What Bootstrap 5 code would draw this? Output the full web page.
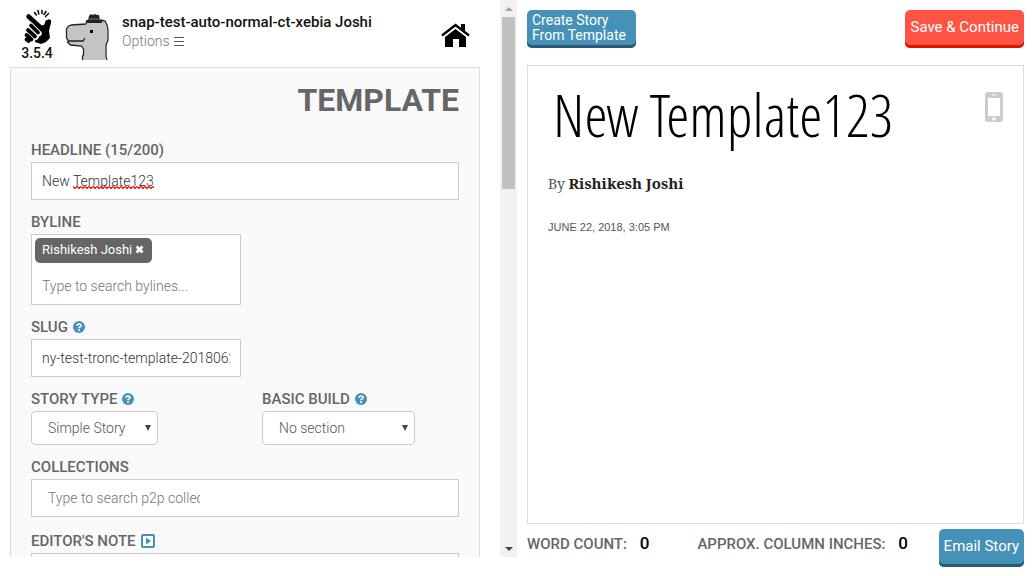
<!DOCTYPE html>
<html lang="en">
<head>
<meta charset="utf-8">
<meta name="viewport" content="width=device-width, initial-scale=1">
<title>Template editor</title>
<link href="https://cdn.jsdelivr.net/npm/bootstrap@5.3.0/dist/css/bootstrap.min.css" rel="stylesheet">
<style>
  body { font-family: Roboto, "Liberation Sans", sans-serif; font-size: 14px; color: #111; background: #fff; }
  a { color: inherit; text-decoration: none; }
  .app { height: 100vh; overflow: hidden; }
  .editor { height: calc(100vh - 19px); overflow: hidden; }
  .editor-body { min-width: 0; padding: 0 20px 0 10px; overflow: hidden; }
  .topbar { height: 67px; padding-top: 9px; }
  .version { width: 54px; font-size: 14px; line-height: 14px; font-weight: 500; }
  .user-name { font-size: 15px; line-height: 20px; margin: 3px 0 0; font-weight: 500; }
  .options { font-size: 14px; line-height: 18px; color: #777; font-weight: 300; }
  .home-link { margin: 14px 10px 0 0; }
  .form-panel { border: 1px solid #ddd; padding: 12px 20px 40px;
    background: linear-gradient(135deg, #f5f5f5 25%, #fff 25% 50%, #f5f5f5 50% 75%, #fff 75%) 0 0 / 4px 4px; }
  .form-panel h1 { font-size: 32px; line-height: 40px; margin-bottom: 18px; font-weight: 700; color: #666; }
  .field { margin-bottom: 10px; }
  .note-field { margin-top: 12px; }
  .field-label { display: flex; align-items: center; gap: 5px; font-size: 15px; line-height: 24px; height: 24px; font-weight: 500; color: #666; }
  .box, .tag-box { background: #fff; border: 1px solid #ccc; border-radius: 0; }
  .box { height: 38px; padding: 0 10px; font-size: 14px; color: #333; font-weight: 300; }
  .wide-pad { padding-left: 16px; }
  .half { flex: none; width: calc(50% - 4px); }
  .pair { gap: 21px; }
  .squiggle { left: 42px; top: 24px; }
  .tag-box { height: 71px; padding: 3px; }
  .tag-box input { border: 0; outline: 0; padding: 0 7px; height: 34px; font-weight: 300; width: 100%; background: none; margin-top: 6px; }
  input::placeholder { color: #757575 !important; opacity: 1; }
  .tag { display: inline-flex; align-items: center; gap: 3px; height: 25px; padding: 0 8px 2px 7px; background: #666; color: #fff; border-radius: 5px; font-size: 13px; }
  .tag button { border: 0; background: none; padding: 0; line-height: 8px; color: #fff; }
  .picker { height: 34px; border: 1px solid #ccc; border-radius: 4px; padding: 0 16px; font-size: 14px; font-weight: 300; color: #555; appearance: none;
    background: #fff url("data:image/svg+xml,%3Csvg xmlns='http://www.w3.org/2000/svg' width='6' height='6'%3E%3Cpath d='M0 0h6L3 6z' fill='%23444'/%3E%3C/svg%3E") no-repeat right 6px top 13px; }
  .picker-story { width: 127px; }
  .picker-build { width: 153px; }
  .collections input { border: 0; outline: 0; padding: 0; width: 152px; font-weight: 300; background: none; }
  .rail { width: 17px; flex: none; background: #f1f1f1; }
  .rail-end { height: 17px; }
  .thumb { height: 172px; width: 13px; background: #c1c1c1; }
  .preview-pane { padding: 10px 10px 9px; }
  .push { border: 0; border-radius: 5px; color: #fff; background: #4591b8; height: 38px; padding: 0 5px 3px; font-size: 15px; line-height: 15px; text-align: left; box-shadow: inset 0 -3px #2b5a72; }
  .push-small { font-size: 14px; padding-right: 10px; }
  .push-save { background: #ff5444; box-shadow: inset 0 -3px #dc1400; }
  .preview { border: 1px solid #ddd; margin: 17px 0 5px; padding: 8px 20px; }
  .preview h2 { font-family: "Open Sans Condensed Light", "Open Sans Condensed", "Roboto Condensed", sans-serif; font-weight: 300; font-size: 59px; line-height: 80px; margin: 0; padding-left: 5px; color: #000; }
  .phone { margin-top: 18px; }
  .byline { font-family: "Noto Serif", "DejaVu Serif", "Liberation Serif", serif; font-size: 14px; line-height: 20px; margin: 19px 0 0; color: #555; }
  .byline b { color: #222; font-size: 15px; }
  .dateline { font-family: "Liberation Sans", sans-serif; font-size: 11px; line-height: 16px; margin: 25px 0 0; color: #555; }
  .count { font-size: 15px; line-height: 28px; font-weight: 500; color: #666; }
  .count b { color: #000; margin-left: 9px; font-size: 17px; font-weight: 500; }
  .count-gap { gap: 48px; }
</style>
</head>
<body>
<div class="app row g-0">
  <section class="col-6 editor d-flex">
    <div class="editor-body flex-grow-1">
      <header class="topbar d-flex">
        <a href="#" class="version text-center">
          <svg class="d-block mx-auto" width="30" height="37" viewBox="0 0 30 37" aria-hidden="true">
            <path d="M9 14l7 3 6-1 2-5 5 2-2 9 1 7-4 4-5 2-6-2-8-9z"/>
            <g fill="none" stroke="#000" stroke-linecap="round">
              <path stroke-width="4.500" d="M6.500 7.500L18 18M27 12.500L24 21"/>
              <path stroke-width="1.500" d="M12.500 3.500l1.800 2.500M16 1.500l.8 3.500M20 1.500v3M24 2.500l-2 3M26.500 4.500l-3 3"/>
              <path stroke="#fff" stroke-width="5.500" d="M9 16.500l8 8M6 21l8 7M4.500 26l6 5"/>
              <path stroke-width="3.800" d="M9 16.500l7 7M6 21l7 6.500M4.500 26l5 4.500M4.500 30.500l2 1.500"/>
            </g>
          </svg>3.5.4</a>
        <svg class="flex-shrink-0" width="46" height="51" viewBox="-2 0 46 51" aria-hidden="true">
          <path d="M16 51v-4l1-1v-6l-2-3-11-1-3-3 1-2-2-2V20l2-3 3-1 15-1 2-4 4-2h8l4 3 2 4 1 5v10l-2 5v12l1 6z" fill="#c4c4c4"/>
          <path d="M16.500 51v-4l1-1v-6l-2-3-11-1-3-3 1-1-2-3V20l2-3 3-1 14-1 2-3 2-1M35 11l4 1 2 4 1 5v10l-2 5v12l1 3M2 32h15l2-3" fill="none" stroke="#222" stroke-width="1.300"/>
          <path d="M20 14v-3h2l1-4 2-2 2 1 2-1 2 1h2l1 5h2v3z" fill="#222"/>
          <path d="M22 10h12" stroke="#777"/><rect x="24" y="21" width="3" height="3"/>
        </svg>
        <div class="ms-2 ps-1 flex-grow-1">
          <p class="user-name">snap-test-auto-normal-ct-xebia Joshi</p>
          <a href="#" class="options d-flex align-items-center gap-1">Options
            <svg width="10" height="9" viewBox="0 0 10 9" aria-hidden="true"><path d="M0 .5h10M0 4.500h10M0 8.500h10" stroke="#555"/></svg></a>
        </div>
        <a href="#" class="home-link" aria-label="Home">
          <svg class="d-block" width="29" height="24" viewBox="0 0 29 24"><path d="M4 14L14.500 6 25 14v10h-7v-8h-6v8H4z"/><path d="M1 12.500L14.500 2 28 12.500" fill="none" stroke="#000" stroke-width="2.400"/><path d="M20 1h4v8l-4-3z"/></svg></a>
      </header>

      <form class="form-panel">
        <h1 class="text-end">TEMPLATE</h1>
        <div class="field">
          <label class="field-label" for="headline">HEADLINE (15/200)</label>
          <div class="position-relative">
            <input id="headline" class="box d-block w-100" value="New Template123" spellcheck="false">
            <svg class="squiggle position-absolute" width="81" height="3" aria-hidden="true"><defs><pattern id="wave" width="4" height="3" patternUnits="userSpaceOnUse"><path d="M0 .5l2 2 2-2" fill="none" stroke="#f00" stroke-width="1.200"/></pattern></defs><rect width="81" height="3" fill="url(#wave)"/></svg>
          </div>
        </div>
        <div class="field half">
          <label class="field-label" for="byline">BYLINE</label>
          <div class="tag-box">
            <span class="tag">Rishikesh Joshi <button type="button" aria-label="Remove"><svg width="9" height="9" viewBox="0 0 9 9"><path d="M1.500 1.500l6 6M7.500 1.500l-6 6" stroke="#fff" stroke-width="2.800"/></svg></button></span>
            <input id="byline" placeholder="Type to search bylines...">
          </div>
        </div>
        <div class="field half">
          <label class="field-label" for="slug">SLUG
            <svg width="12" height="12" viewBox="0 0 12 12" aria-hidden="true"><g id="help"><circle cx="6" cy="6" r="6" fill="#4591b8"/><path d="M4 4.700C4 2.400 8 2.500 8 4.500 8 5.900 6 5.700 6 7.300M6 8.300v1.700" fill="none" stroke="#fff" stroke-width="1.700"/></g></svg></label>
          <input id="slug" class="box d-block w-100" value="ny-test-tronc-template-20180622">
        </div>
        <div class="field d-flex pair">
          <div class="half">
            <label class="field-label" for="story">STORY TYPE <svg width="12" height="12" viewBox="0 0 12 12" aria-hidden="true"><use href="#help"/></svg></label>
            <select id="story" class="picker picker-story d-block"><option>Simple Story</option></select>
          </div>
          <div>
            <label class="field-label" for="build">BASIC BUILD <svg width="12" height="12" viewBox="0 0 12 12" aria-hidden="true"><use href="#help"/></svg></label>
            <select id="build" class="picker picker-build d-block"><option>No section</option></select>
          </div>
        </div>
        <div class="field">
          <label class="field-label" for="collections">COLLECTIONS</label>
          <div class="box wide-pad collections d-flex align-items-center"><input id="collections" placeholder="Type to search p2p collections"></div>
        </div>
        <div class="field note-field">
          <label class="field-label" for="note">EDITOR'S NOTE <svg width="14" height="14" viewBox="0 0 14 14" aria-hidden="true"><rect x="1" y="1" width="12" height="12" rx="1" fill="#fff" stroke="#4591b8" stroke-width="2"/><path d="M5 3.500L10 7l-5 3.500z" fill="#4591b8"/></svg></label>
          <textarea id="note" class="box d-block w-100"></textarea>
        </div>
      </form>
    </div>
    <div class="rail d-flex flex-column align-items-center" aria-hidden="true">
      <div class="rail-end d-flex align-items-center"><svg width="8" height="4"><path d="M0 4l4-4 4 4z" fill="#a3a3a3"/></svg></div>
      <div class="thumb"></div>
      <div class="rail-end mt-auto d-flex align-items-center"><svg width="8" height="4"><path d="M0 0h8L4 4z" fill="#444"/></svg></div>
    </div>
  </section>

  <section class="col-6 preview-pane d-flex flex-column h-100">
    <div class="d-flex justify-content-between">
      <button type="button" class="push push-small">Create Story<br>From Template</button>
      <button type="button" class="push push-save">Save &amp; Continue</button>
    </div>
    <article class="preview flex-grow-1">
      <div class="d-flex justify-content-between">
        <h2>New Template123</h2>
        <svg class="phone flex-shrink-0" width="18" height="30" viewBox="0 0 18 30" aria-hidden="true"><rect width="18" height="30" rx="3" fill="#ccc"/><path d="M3 6h12v18H3zM7 2.500h4v1H7z" fill="#fff"/><circle cx="9" cy="27" r="1.800" fill="#fff"/></svg>
      </div>
      <p class="byline">By <b>Rishikesh Joshi</b></p>
      <p class="dateline">JUNE 22, 2018, 3:05 PM</p>
    </article>
    <footer class="d-flex justify-content-between">
      <div class="d-flex count-gap count"><span>WORD COUNT: <b>0</b></span><span>APPROX. COLUMN INCHES: <b>0</b></span></div>
      <button type="button" class="push">Email Story</button>
    </footer>
  </section>
</div>
<script src="https://cdn.jsdelivr.net/npm/bootstrap@5.3.0/dist/js/bootstrap.bundle.min.js"></script>
</body>
</html>
